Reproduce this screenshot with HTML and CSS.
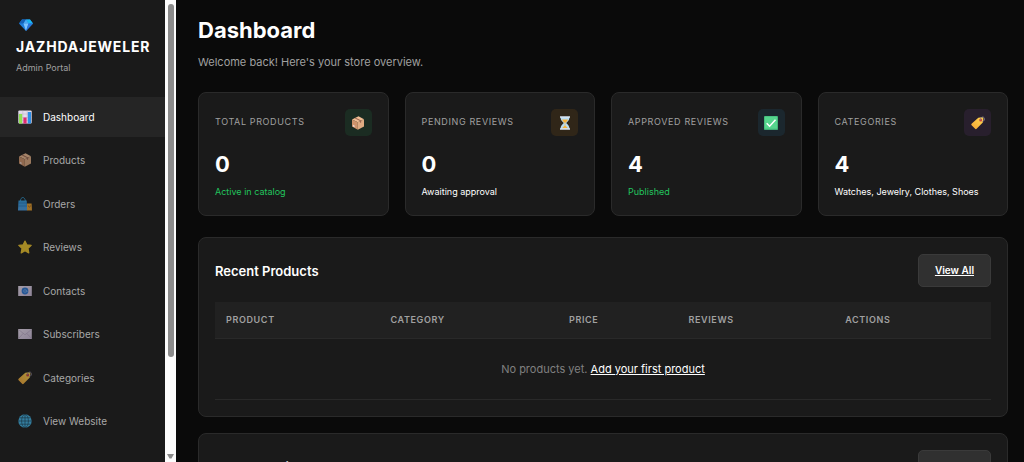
FILE: index.html
```html
<!DOCTYPE html>
<html lang="en">
<head>
<meta charset="utf-8">
<meta name="viewport" content="width=device-width, initial-scale=1">
<title>Dashboard - JAZHDAJEWELER Admin Portal</title>
<link rel="stylesheet" href="styles.css">
</head>
<body>
<svg class="sprite" aria-hidden="true">
  <defs>
    <linearGradient id="gold" x1="0" y1="1" x2="1" y2="0"><stop offset="0" stop-color="#f5a535"/><stop offset="1" stop-color="#ffd84f"/></linearGradient>
    <linearGradient id="paper" x1="0" y1="0" x2="1" y2="1"><stop offset="0" stop-color="#eee3f5"/><stop offset="1" stop-color="#cdbddc"/></linearGradient>
    <linearGradient id="bluebag" x1="0" y1="0" x2="0" y2="1"><stop offset="0" stop-color="#2f9be0"/><stop offset="1" stop-color="#4a9fe8"/></linearGradient>
    <symbol id="gem" viewBox="0 0 14 14">
      <path fill="#1f7fdb" d="M3 1.500h8l3 4L7 13 0 5.500z"/>
      <path fill="#19b9f2" d="M7 1.500h4l3 4H9.500z"/>
      <path fill="#1461b8" d="M3 1.500 0 5.500h4.500L7 1.500z"/>
      <path fill="#4aa9f3" d="M7 1.500 4.500 5.500h5z"/>
      <path fill="#7cc4ff" d="M4.500 5.500h5L7 13z"/>
      <path fill="#2a74dc" d="M9.500 5.500H14L7 13z"/>
    </symbol>
    <symbol id="chart" viewBox="0 0 14 14">
      <rect x=".3" y=".5" width="13.400" height="13" rx="1" fill="#e3dcec"/>
      <path stroke="#bcb0ca" stroke-width=".5" d="M.5 4h13M.5 7.500h13M.5 10.500h13M4.800.6v13M9.200.6v13"/>
      <rect x="1" y="4" width="3.200" height="9.500" fill="#8fe052"/>
      <rect x="5.400" y="7.500" width="3.200" height="6" fill="#e02a70"/>
      <rect x="9.800" y="2" width="3.200" height="11.500" fill="#2f8fe6"/>
    </symbol>
    <symbol id="box" viewBox="0 0 14 14">
      <path fill="#f0bd94" d="M7.500.3 13 3.200 6.800 6.300 1 3.500z"/>
      <path fill="#cf946c" d="M1 3.500l5.800 2.800v7.400L1 10.500z"/>
      <path fill="#dfab82" d="M13 3.200v7.200l-6.200 3.300V6.300z"/>
      <path fill="#9a6551" d="M3.600 2.200 4.800 1.700l5.400 2.800v1.800l-1.200.6V5z"/>
      <path fill="#f0d8d0" d="M2 8.800l1.600.8v1.600L2 10.400z"/>
    </symbol>
    <symbol id="bags" viewBox="0 0 14 14">
      <path fill="none" stroke="#2e93c9" stroke-width="1" d="M2.400 4.500C2.400-.8 7.200-.8 7.400 4.500"/>
      <path fill="url(#bluebag)" d="M.5 3.500h8.200l.5 10H0z"/>
      <path stroke="#1a62a8" stroke-width=".5" d="M.5 6h8.500M.3 9h8.800"/>
      <path fill="#e8a02e" d="M9 6.500h4.600l.4 7H9z"/>
      <path fill="none" stroke="#9c5a14" stroke-width=".8" d="M10.300 8.500c.2 2.200 2 2.200 2.200 0"/>
    </symbol>
    <symbol id="star" viewBox="0 0 14 14">
      <path fill="#f0c62c" stroke="#f0c62c" stroke-width="1.200" stroke-linejoin="round" d="M7 1l1.800 3.800 4.400.6-3.200 3 .8 4.500L7 10.800l-3.800 2.100.8-4.500-3.200-3 4.400-.6z"/>
    </symbol>
    <symbol id="contact" viewBox="0 0 14 14">
      <rect x=".2" y="2" width="13.600" height="10" fill="url(#paper)"/>
      <circle cx="7" cy="7" r="3.400" fill="#2d78d8"/>
      <circle cx="7" cy="7" r="1.400" fill="none" stroke="#86b5ee" stroke-width=".6"/>
      <path fill="none" stroke="#86b5ee" stroke-width=".5" d="M8.400 6v1.400c.1.900 1.100.8 1.100-.4"/>
    </symbol>
    <symbol id="mail" viewBox="0 0 14 14">
      <rect x=".2" y="2" width="13.600" height="10" fill="url(#paper)"/>
      <path fill="none" stroke="#b5a2c3" stroke-width=".6" d="M.6 2.500 7 7.800l6.400-5.300M.6 11.500l4.500-5M13.400 11.500l-4.500-5"/>
    </symbol>
    <symbol id="tag" viewBox="0 0 14 14">
      <path fill="url(#gold)" d="M7.300 1.700 11 1.300c.8 0 1.400.6 1.400 1.400l-.6 3.700-6.200 6.400c-.5.500-1 .5-1.500 0L.6 9.300c-.5-.5-.5-1 0-1.500z"/>
      <circle cx="9.700" cy="4" r="1.500" fill="#c4463f"/>
      <path fill="none" stroke="#8b8294" stroke-width=".8" d="M9.600 4C9.200 1.400 11.800.300 13 1.600c1.200 1.400.2 3.800-1.800 4"/>
    </symbol>
    <symbol id="globe" viewBox="0 0 14 14">
      <circle cx="7" cy="7" r="6.700" fill="#42b4e6"/>
      <path fill="none" stroke="#17384a" stroke-width=".6" d="M7 .3v13.400M.3 7h13.400M1.500 3.800h11M1.500 10.200h11"/>
      <ellipse cx="7" cy="7" rx="3.400" ry="6.600" fill="none" stroke="#17384a" stroke-width=".6"/>
    </symbol>
    <symbol id="hourglass" viewBox="0 0 14 14">
      <path fill="#b8dcf3" d="M2.500 1h9c0 3-1.500 4.300-3.300 6 1.800 1.700 3.300 3 3.300 6h-9c0-3 1.500-4.300 3.300-6C4 5.300 2.500 4 2.500 1z"/>
      <path fill="#f5b23c" d="M4 3.500h6C9.500 5 8.300 6 7.300 6.800V9.500L10 12.200H4l2.700-2.700V6.800C5.700 6 4.500 5 4 3.500z"/>
      <path fill="#d9e4ef" d="M2 .2h10v1.600H2zM2 12.200h10v1.600H2z"/>
    </symbol>
    <symbol id="check" viewBox="0 0 14 14">
      <rect width="14" height="14" rx=".8" fill="#3fae74"/>
      <rect x=".6" y=".4" width="12.600" height="12.400" rx=".6" fill="#55d68d"/>
      <path fill="none" stroke="#fff" stroke-width="1.500" d="M2.700 7.200l2.900 3L11.500 3.800"/>
    </symbol>
  </defs>
</svg>
<div class="app">
  <aside class="sidebar">
    <div class="sidebar-content">
      <div class="brand">
        <svg class="icon brand-icon" aria-hidden="true"><use href="#gem"/></svg>
        <div class="brand-name">JAZHDAJEWELER</div>
        <div class="brand-sub">Admin Portal</div>
      </div>
      <nav class="nav">
        <a class="nav-item active" href="#"><svg class="icon" aria-hidden="true"><use href="#chart"/></svg>Dashboard</a>
        <a class="nav-item" href="#"><svg class="icon" aria-hidden="true"><use href="#box"/></svg>Products</a>
        <a class="nav-item" href="#"><svg class="icon" aria-hidden="true"><use href="#bags"/></svg>Orders</a>
        <a class="nav-item" href="#"><svg class="icon" aria-hidden="true"><use href="#star"/></svg>Reviews</a>
        <a class="nav-item" href="#"><svg class="icon" aria-hidden="true"><use href="#contact"/></svg>Contacts</a>
        <a class="nav-item" href="#"><svg class="icon" aria-hidden="true"><use href="#mail"/></svg>Subscribers</a>
        <a class="nav-item" href="#"><svg class="icon" aria-hidden="true"><use href="#tag"/></svg>Categories</a>
        <a class="nav-item" href="#"><svg class="icon" aria-hidden="true"><use href="#globe"/></svg>View Website</a>
      </nav>
    </div>
    <div class="scrollbar" aria-hidden="true">
      <div class="scroll-thumb"></div>
      <svg class="scroll-arrow" viewBox="0 0 7 5"><path fill="#8b8b8b" d="M0 0h7L4.500 4.500h-2z"/></svg>
    </div>
  </aside>
  <main class="main">
    <header class="page-header">
      <h1 class="page-title">Dashboard</h1>
      <p class="page-sub">Welcome back! Here's your store overview.</p>
    </header>
    <section class="stats">
      <article class="card stat">
        <div class="stat-head"><h2 class="stat-label">Total Products</h2><span class="stat-icon green"><svg class="icon" aria-hidden="true"><use href="#box"/></svg></span></div>
        <div class="stat-value">0</div>
        <div class="stat-note positive">Active in catalog</div>
      </article>
      <article class="card stat">
        <div class="stat-head"><h2 class="stat-label">Pending Reviews</h2><span class="stat-icon amber"><svg class="icon" aria-hidden="true"><use href="#hourglass"/></svg></span></div>
        <div class="stat-value">0</div>
        <div class="stat-note">Awaiting approval</div>
      </article>
      <article class="card stat">
        <div class="stat-head"><h2 class="stat-label">Approved Reviews</h2><span class="stat-icon blue"><svg class="icon" aria-hidden="true"><use href="#check"/></svg></span></div>
        <div class="stat-value">4</div>
        <div class="stat-note positive">Published</div>
      </article>
      <article class="card stat">
        <div class="stat-head"><h2 class="stat-label">Categories</h2><span class="stat-icon purple"><svg class="icon" aria-hidden="true"><use href="#tag"/></svg></span></div>
        <div class="stat-value">4</div>
        <div class="stat-note">Watches, Jewelry, Clothes, Shoes</div>
      </article>
    </section>
    <section class="card panel">
      <div class="panel-head"><h2 class="panel-title">Recent Products</h2><a class="button" href="#">View All</a></div>
      <table class="table">
        <colgroup><col class="col-product"><col class="col-category"><col class="col-price"><col class="col-reviews"><col class="col-actions"></colgroup>
        <thead><tr><th>Product</th><th>Category</th><th>Price</th><th>Reviews</th><th>Actions</th></tr></thead>
        <tbody><tr><td colspan="5">No products yet. <a class="link" href="#">Add your first product</a></td></tr></tbody>
      </table>
    </section>
    <section class="card panel">
      <div class="panel-head"><h2 class="panel-title">Recent Reviews</h2><a class="button" href="#">View All</a></div>
    </section>
  </main>
</div>
</body>
</html>
```

FILE: styles.css
```css
* { box-sizing: border-box; }

body {
  margin: 0;
  background: #0a0a0a;
  color: #fff;
  font-family: Inter, "Liberation Sans", sans-serif;
  font-size: 11px;
  line-height: 16px;
}

h1, h2, p { margin: 0; }

.sprite { position: absolute; width: 0; height: 0; }
.icon { width: 14px; height: 14px; flex: none; display: block; }

.app { display: flex; height: 100vh; overflow: hidden; }

/* Sidebar */
.sidebar { flex: none; width: 176px; display: flex; background: #1a1a1a; }
.sidebar-content { flex: 1; min-width: 0; display: flex; flex-direction: column; }
.brand { padding: 18px 16px 21px; }
.brand-icon { margin: 0 0 5px 3px; }
.brand-name { font-size: 14px; font-weight: 700; line-height: 20px; letter-spacing: .06em; }
.brand-sub { margin-top: 3px; font-size: 9px; color: #a0a0a0; }
.nav { flex: 1; display: flex; flex-direction: column; justify-content: space-between; padding-bottom: 21px; }
.nav-item {
  display: flex;
  align-items: center;
  gap: 11px;
  padding: 12px 18px;
  color: #a8a8a8;
  font-size: 10px;
  text-decoration: none;
}
.nav-item .icon { opacity: .65; }
.nav-item.active { background: #252525; color: #fff; }
.nav-item.active .icon { opacity: 1; }

.scrollbar {
  flex: none;
  width: 11px;
  display: flex;
  flex-direction: column;
  align-items: center;
  justify-content: space-between;
  padding: 4px 0 3px;
  background: #fcfcfc;
}
.scroll-thumb { width: 6px; height: 77.5%; border-radius: 3px; background: #8b8b8b; }
.scroll-arrow { width: 7px; height: 5px; }

/* Main column */
.main { flex: 1; min-width: 0; padding: 16px 16px 0 22px; }
.page-title { font-size: 22px; font-weight: 700; line-height: 28px; }
.page-sub { margin-top: 10px; color: #a0a0a0; }

.card { background: #1a1a1a; border: 1px solid #2a2a2a; border-radius: 8px; padding: 16px; }

.stats { display: grid; grid-template-columns: repeat(4, 1fr); gap: 16px; margin: 22px 0 21px; }
.stat-head { display: flex; justify-content: space-between; align-items: flex-start; }
.stat-label { padding-top: 5px; font-size: 9px; font-weight: 400; letter-spacing: .07em; text-transform: uppercase; color: #a0a0a0; }
.stat-icon { display: grid; place-items: center; width: 27px; height: 27px; border-radius: 5px; }
.green { background: #1b2c22; }
.amber { background: #302618; }
.blue { background: #1b272e; }
.purple { background: #281f2d; }
.stat-value { margin-top: 14px; font-size: 22px; font-weight: 700; line-height: 28px; }
.stat-note { margin-top: 6px; font-size: 9px; line-height: 15px; }
.positive { color: #22c55e; }

.panel { margin-bottom: 16px; }
.panel-head { display: flex; justify-content: space-between; align-items: center; }
.panel-title { font-size: 13px; font-weight: 600; }
.button {
  padding: 8px 16px;
  border: 1px solid #3a3a3a;
  border-radius: 5px;
  background: #303030;
  color: #fff;
  font-size: 10px;
  font-weight: 600;
  line-height: 15px;
}

.table { width: 100%; margin-top: 15px; border-collapse: collapse; table-layout: fixed; }
.col-product { width: 21.2%; }
.col-category { width: 23%; }
.col-price { width: 15.4%; }
.col-reviews { width: 20.2%; }
.col-actions { width: 20.2%; }
.table th {
  padding: 10px 11px;
  background: #212121;
  border-bottom: 1px solid #292929;
  color: #a0a0a0;
  font-size: 9px;
  font-weight: 600;
  letter-spacing: .07em;
  text-align: left;
  text-transform: uppercase;
}
.table td { padding: 22px 11px; border-bottom: 1px solid #292929; color: #808080; text-align: center; }
.link { color: #fff; }
```
